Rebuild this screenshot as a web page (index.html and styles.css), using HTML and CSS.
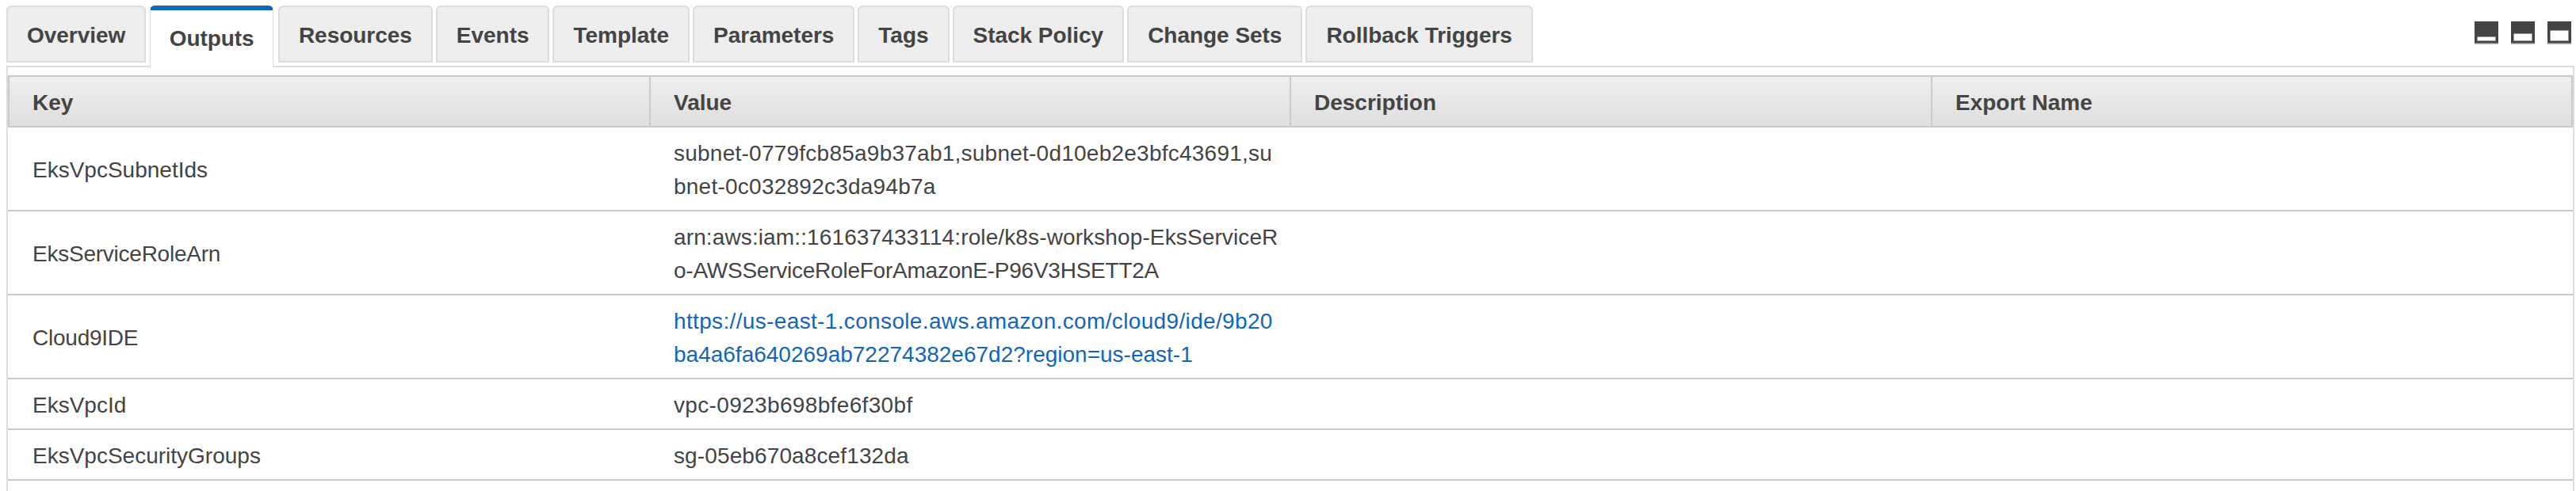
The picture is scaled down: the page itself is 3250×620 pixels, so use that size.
FILE: index.html
```html
<!DOCTYPE html>
<html lang="en">
<head>
<meta charset="utf-8">
<title>Stack outputs</title>
<link rel="stylesheet" href="styles.css">
</head>
<body>
<div class="pane">
  <div class="topbar">
    <nav class="tabs">
      <a class="tab">Overview</a>
      <a class="tab tab-active">Outputs</a>
      <a class="tab">Resources</a>
      <a class="tab">Events</a>
      <a class="tab">Template</a>
      <a class="tab">Parameters</a>
      <a class="tab">Tags</a>
      <a class="tab">Stack Policy</a>
      <a class="tab">Change Sets</a>
      <a class="tab">Rollback Triggers</a>
    </nav>
    <div class="sizers">
      <svg class="sizer" viewBox="0 0 30 29"><path fill="#444" d="M0 0h30v27H0z"/><path fill="#888" d="M0 27h30v1H0z"/><path fill="#bbb" d="M0 28h30v1H0z"/><rect x="3" y="19" width="24" height="6" rx="1" fill="#999"/><path fill="#fff" d="M4 20h22v4H4z"/></svg>
      <svg class="sizer" viewBox="0 0 30 29"><path fill="#444" d="M0 0h30v27H0z"/><path fill="#888" d="M0 27h30v1H0z"/><path fill="#bbb" d="M0 28h30v1H0z"/><rect x="3" y="15" width="24" height="10" rx="1" fill="#999"/><path fill="#fff" d="M4 16h22v8H4z"/></svg>
      <svg class="sizer" viewBox="0 0 30 29"><path fill="#444" d="M0 0h30v27H0z"/><path fill="#888" d="M0 27h30v1H0z"/><path fill="#bbb" d="M0 28h30v1H0z"/><rect x="3" y="11" width="24" height="14" rx="1" fill="#999"/><path fill="#fff" d="M4 12h22v12H4z"/></svg>
    </div>
  </div>
  <div class="panel">
    <div class="row head">
      <div class="cell">Key</div><div class="cell">Value</div><div class="cell">Description</div><div class="cell">Export Name</div>
    </div>
    <div class="row"><div class="cell">EksVpcSubnetIds</div><div class="cell loose">subnet-0779fcb85a9b37ab1,subnet-0d10eb2e3bfc43691,su<br>bnet-0c032892c3da94b7a</div></div>
    <div class="row"><div class="cell tight">EksServiceRoleArn</div><div class="cell"><span class="slight">arn:aws:iam::161637433114:role/k8s-workshop-EksServiceR</span><br><span class="tight">o-AWSServiceRoleForAmazonE-P96V3HSETT2A</span></div></div>
    <div class="row"><div class="cell tight">Cloud9IDE</div><div class="cell"><a class="link"><span class="looser">https://us-east-1.console.aws.amazon.com/cloud9/ide/9b20</span><br>ba4a6fa640269ab72274382e67d2?region=us-east-1</a></div></div>
    <div class="row"><div class="cell">EksVpcId</div><div class="cell looser">vpc-0923b698bfe6f30bf</div></div>
    <div class="row"><div class="cell">EksVpcSecurityGroups</div><div class="cell slight">sg-05eb670a8cef132da</div></div>
  </div>
</div>
</body>
</html>
```
FILE: styles.css
```css
* { box-sizing: border-box; }
body {
  margin: 0;
  background: #fff;
  color: #444;
  font: 28px/42px "Liberation Sans", Arial, sans-serif;
}
.pane {
  height: 620px;
  padding: 7px 2px 0 8px;
  display: flex;
  flex-direction: column;
  overflow: hidden;
}
.topbar {
  height: 76px;
  flex: none;
  display: flex;
  justify-content: space-between;
}
.tabs {
  display: flex;
  align-items: flex-start;
  gap: 4px;
}
.tab {
  height: 72px;
  padding: 15px 24px 0;
  border: 2px solid #ddd;
  border-radius: 6px 6px 0 0;
  background: #eee;
  font-weight: bold;
  letter-spacing: -0.03px;
  white-space: nowrap;
}
/* The active tab overlaps the panel's top border. */
.tab-active {
  height: 79px;
  z-index: 1;
  margin: 0 1.5px 0 0.5px;
  background: #fff;
  border-width: 6px 1px 0;
  border-top-color: #16b;
  letter-spacing: -0.1px;
}
.sizers {
  display: flex;
  gap: 16px;
  padding: 20px 4px 0 0;
}
.sizer { width: 30px; height: 29px; }
.panel {
  flex: 1;
  border: 2px solid #ddd;
  border-bottom: 0;
  padding-top: 10px;
}
.row {
  display: grid;
  grid-template-columns: 811px 808px 809px 808px;
  align-items: center;
  padding: 12px 0 8px;
  border-bottom: 2px solid #ccc;
}
.cell { padding-left: 29px; white-space: nowrap; }
.cell:first-child { padding-left: 31px; }
.head {
  grid-template-columns: 809px 808px 809px 1fr;
  align-items: stretch;
  padding: 0;
  border: 2px solid #ccc;
  background: linear-gradient(#eee, #dfdfdf);
  font-weight: bold;
}
.head .cell {
  padding-top: 12px;
  padding-bottom: 8px;
  border-right: 2px solid #ccc;
}
.head .cell:first-child { padding-left: 29px; }
.head .cell:last-child { border-right: 0; }
.link { color: #16b; }

.tight { letter-spacing: -0.24px; }
.slight { letter-spacing: 0.12px; }
.loose { letter-spacing: 0.24px; }
.looser { letter-spacing: 0.35px; }
```
